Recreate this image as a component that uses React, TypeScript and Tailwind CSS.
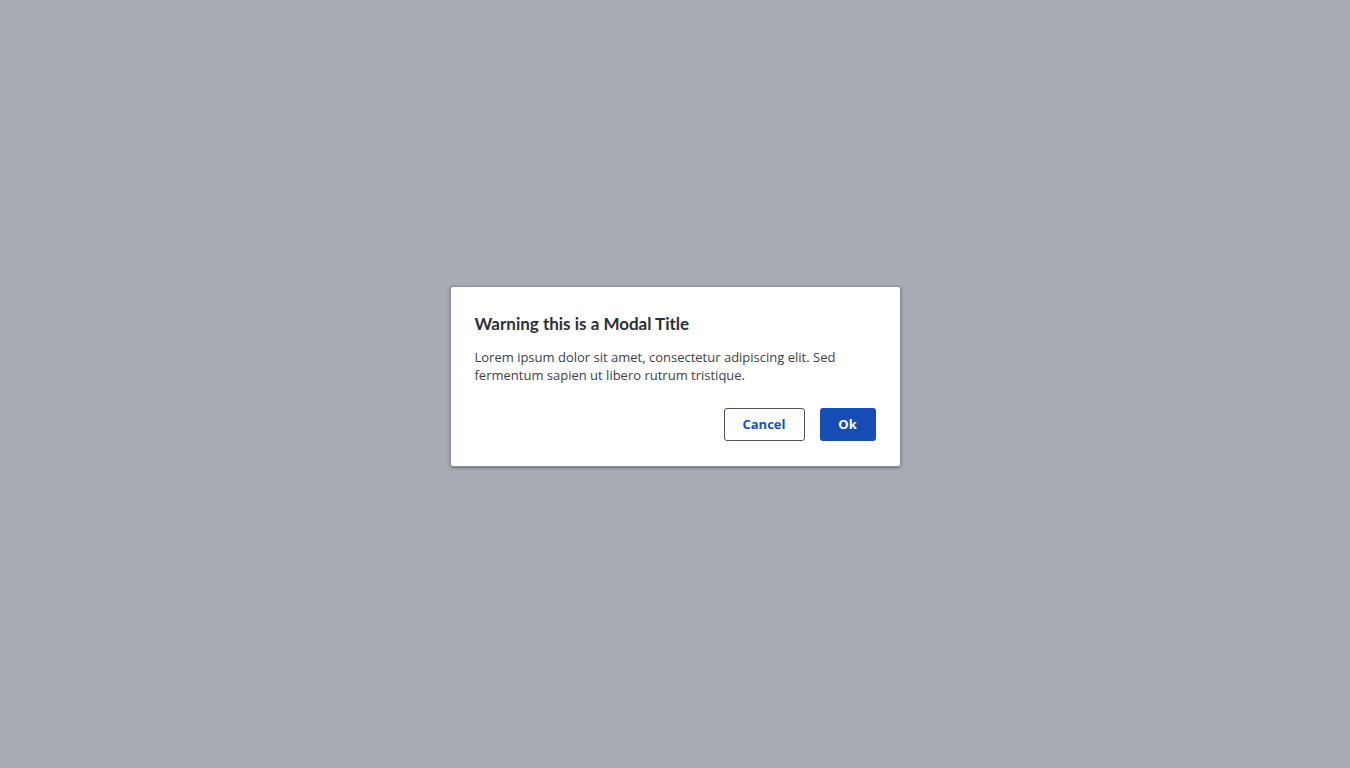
import React from "react";

const App: React.FC = () => {
    return (
        <div className="flex min-h-screen w-full items-center justify-center bg-[#a8abb4] pb-[15px]">
            <div className="flex w-[451px] flex-col rounded-[3px] border border-[#8d9099] bg-white px-6 pt-[25px] pb-[25px] shadow-[0_1px_3px_rgba(0,0,0,0.35)]">
                <h2 className="font-['Lato',sans-serif] text-[17px] font-bold leading-6 text-[#2b2f38]">Warning this is a Modal Title</h2>
                <p className="mt-[12px] font-['Open_Sans',sans-serif] text-[13px] leading-[18px] text-[#3b414d]">
                    Lorem ipsum dolor sit amet, consectetur adipiscing elit. Sed fermentum sapien ut libero rutrum tristique.
                </p>
                <div className="mt-[24px] flex justify-end gap-[15px] font-['Open_Sans',sans-serif] text-[13px] font-bold">
                    <button className="h-[33px] w-[81px] rounded-[3px] border border-[#4a5263] bg-white text-[#1a4fb8]">Cancel</button>
                    <button className="h-[33px] w-[56px] rounded-[3px] bg-[#164db4] text-white">Ok</button>
                </div>
            </div>
        </div>
    );
};

export default App;
